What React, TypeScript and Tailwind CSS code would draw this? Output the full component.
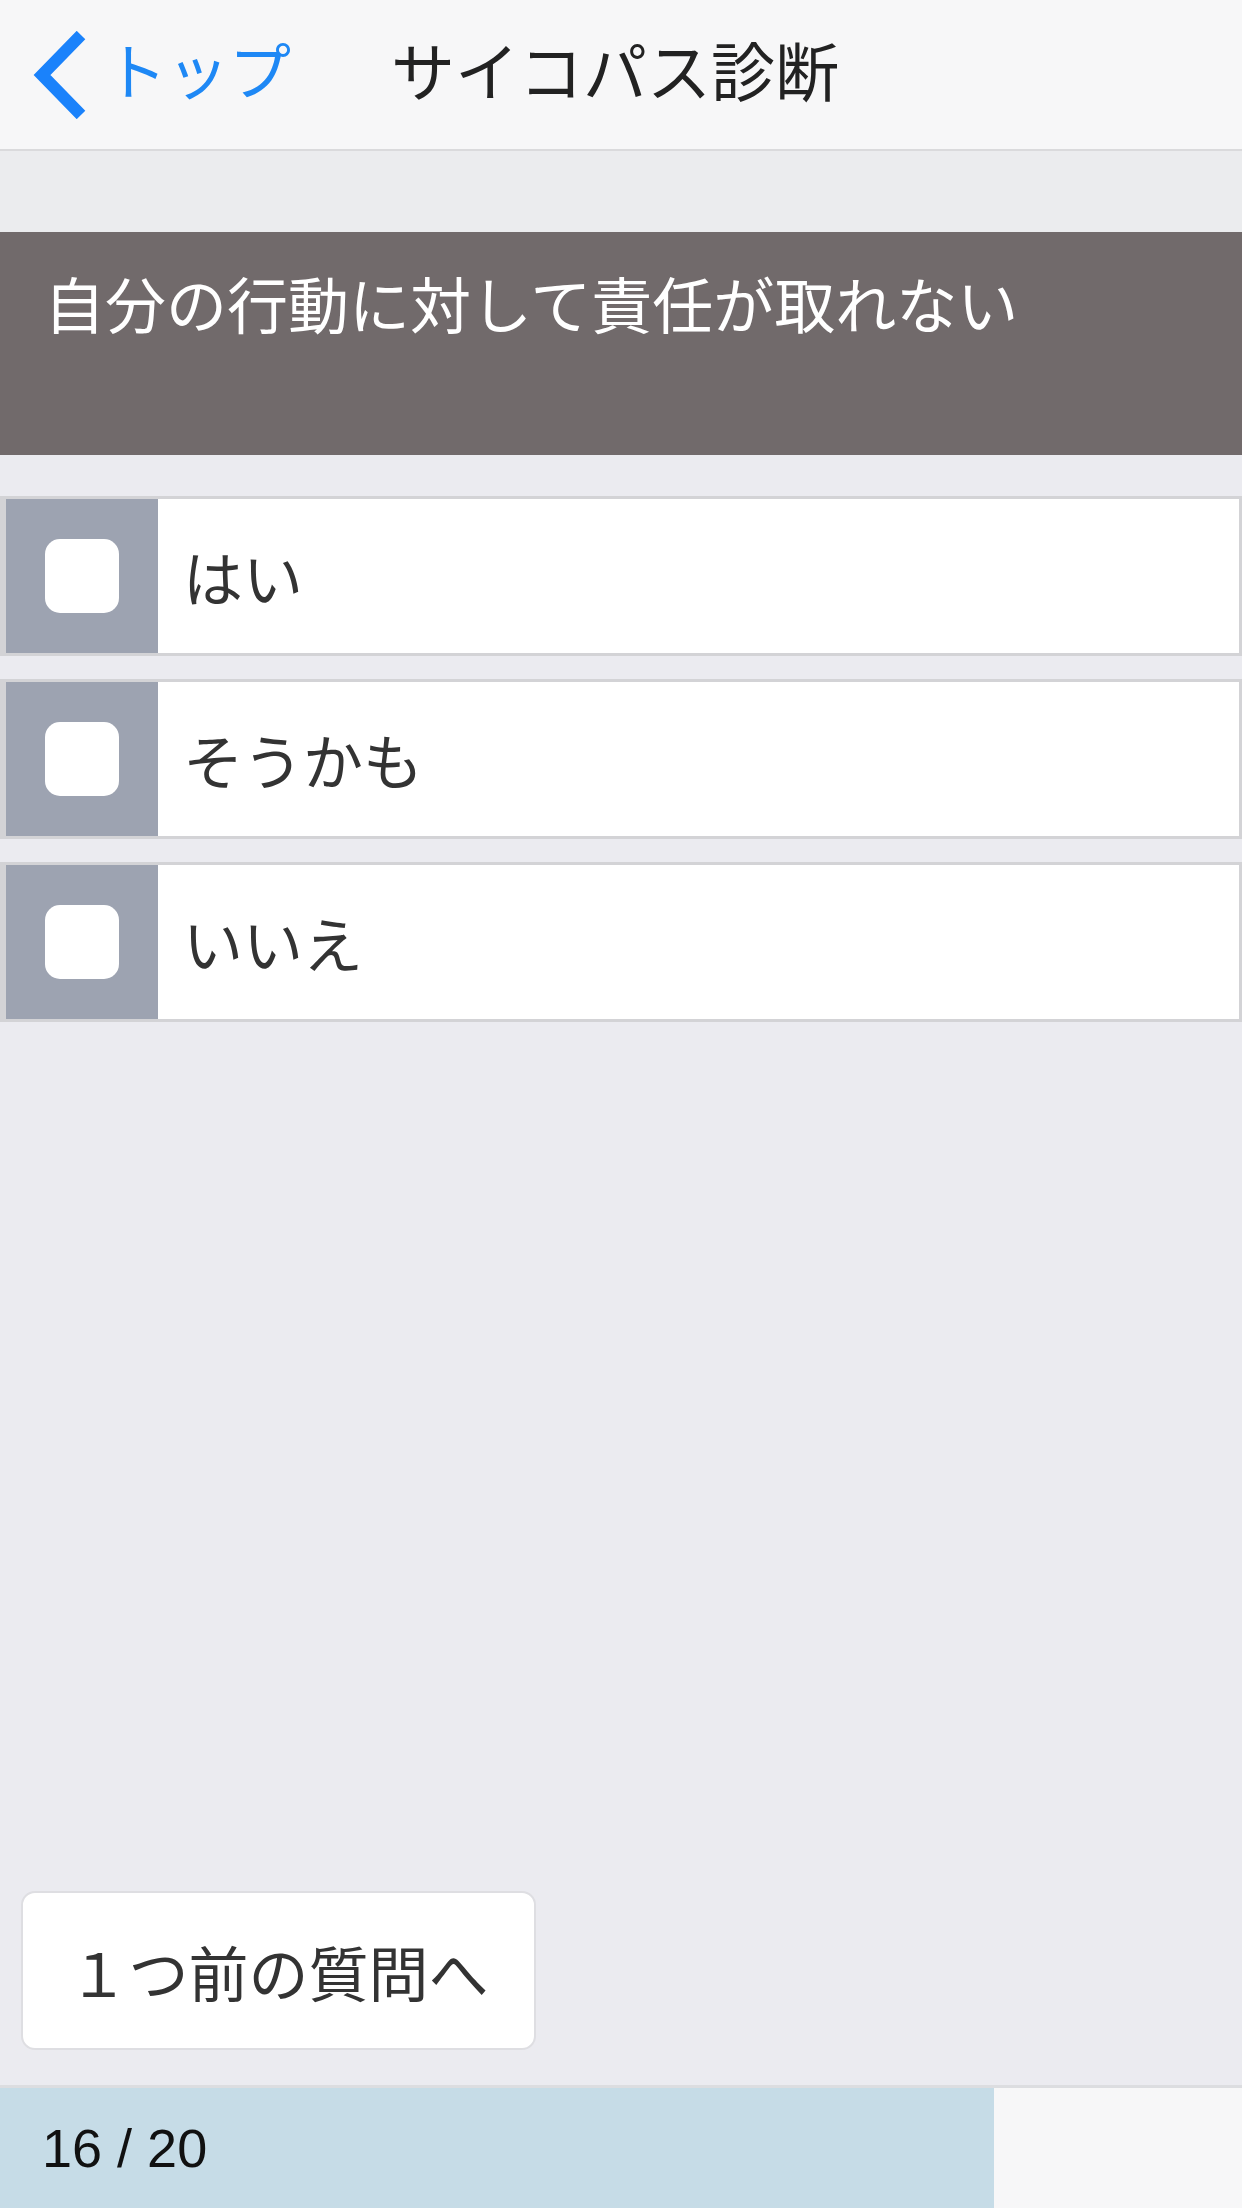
import React from "react";

const jp = { fontFamily: '"Noto Sans CJK JP", "Noto Sans", sans-serif' };

const choices = ["はい", "そうかも", "いいえ"];

function Choice({ label }: { label: string }) {
  return (
    <div className="flex h-[160px] border-[3px] border-l-[6px] border-[#d3d3d6] bg-white">
      <div className="flex w-[152px] shrink-0 items-center justify-center bg-[#9da3b1]">
        <div className="h-[74px] w-[74px] rounded-[15px] bg-white" />
      </div>
      <div className="flex items-center pl-[25px] text-[60px] leading-none text-[#333]">{label}</div>
    </div>
  );
}

export default function App() {
  const current = 16;
  const total = 20;
  return (
    <div className="flex h-[2208px] w-[1242px] flex-col bg-[#ebebf0]" style={jp}>
      <header className="flex h-[151px] shrink-0 items-center border-b-[2px] border-[#dadadc] bg-[#f7f7f8] pb-[14px]">
        <div className="flex items-center pl-[33px]">
          <svg width="56" height="88" viewBox="0 0 56 88" className="mt-[14px]">
            <path d="M48 4 L9 44 L48 84" fill="none" stroke="#1a82fb" strokeWidth="12" strokeLinejoin="miter" />
          </svg>
          <span className="ml-[16px] text-[62px] leading-none text-[#1e88f5]">トップ</span>
        </div>
        <h1 className="ml-[100px] text-[64px] font-normal leading-none text-[#222]">サイコパス診断</h1>
      </header>

      <div className="h-[81px] shrink-0 bg-[#ebecee]" />

      <div className="h-[223px] shrink-0 bg-[#716a6b] px-[44px] pt-[34px] text-[61px] leading-[1.2] text-white">
        自分の行動に対して責任が取れない
      </div>

      <div className="mt-[41px] flex flex-col gap-[23px]">
        {choices.map((c) => (
          <Choice key={c} label={c} />
        ))}
      </div>

      <div className="flex-1" />

      <div className="px-[21px] pb-[35px]">
        <button className="flex h-[159px] w-[515px] items-center justify-center rounded-[14px] border-[2px] border-[#dedee2] bg-white text-[60px] leading-none text-[#333]">
          １つ前の質問へ
        </button>
      </div>

      <div className="flex h-[123px] shrink-0 border-t-[3px] border-[#dcdde0] bg-[#f7f7f8]">
        <div
          className="flex items-center bg-[#c6dce7] pl-[42px]"
          style={{ width: `${(current / total) * 100}%` }}
        >
          <span className="text-[54px] leading-none text-[#111]" style={{ fontFamily: '"Liberation Sans", Arial, sans-serif' }}>
            {current} / {total}
          </span>
        </div>
      </div>
    </div>
  );
}
